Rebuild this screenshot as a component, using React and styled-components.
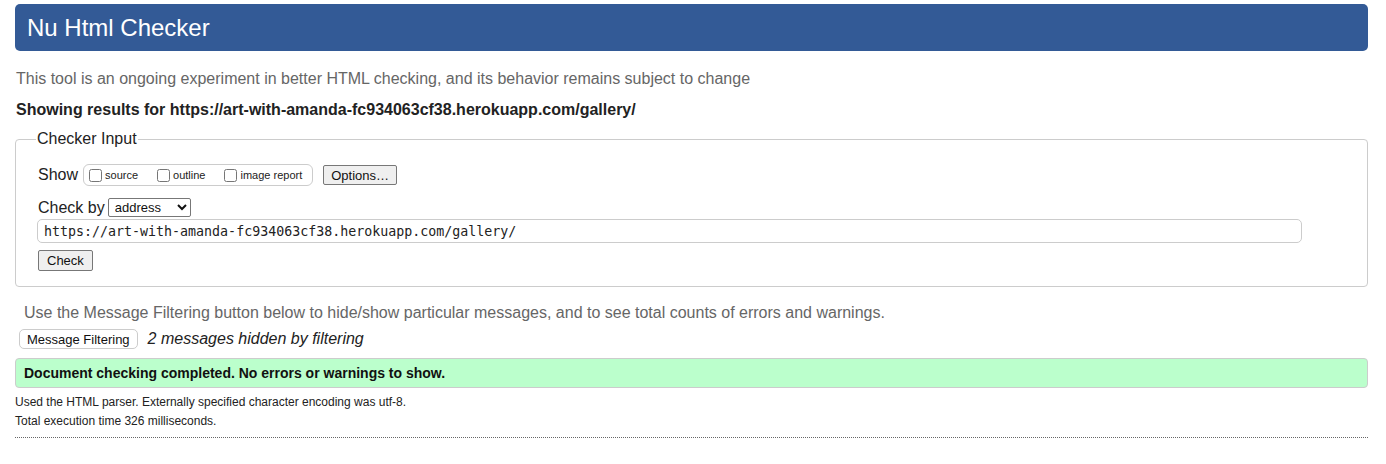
import React from 'react';
import styled, { createGlobalStyle } from 'styled-components';

const GlobalStyle = createGlobalStyle`
    body {
        margin: 0;
        background: #fff;
        font-family: "Liberation Sans", Arial, sans-serif;
        color: #222;
    }
`;

const Page = styled.div`
    padding: 4px 18px 0 15px;
    display: flex;
    flex-direction: column;
`;

const Header = styled.h1`
    margin: 0;
    height: 47px;
    background: #335a96;
    border-radius: 5px;
    color: #fff;
    font-size: 24px;
    font-weight: normal;
    display: flex;
    align-items: center;
    padding-left: 12px;
`;

const Intro = styled.p`
    margin: 18px 0 0 1px;
    font-size: 16px;
    color: #666;
    line-height: 20px;
`;

const Results = styled.p`
    margin: 11px 0 0 1px;
    font-size: 16px;
    font-weight: bold;
    color: #222;
    line-height: 20px;
`;

const Fieldset = styled.fieldset`
    margin: 10px 0 0;
    border: 1px solid #ccc;
    border-radius: 4px;
    padding: 16px 22px 15px 22px;
    display: flex;
    flex-direction: column;

    legend {
        font-size: 16px;
        padding: 0 1px;
        margin-left: -2px;
        color: #222;
    }
`;

const Row = styled.div`
    display: flex;
    align-items: center;
    font-size: 16px;
    margin-top: ${p => p.mt || 0}px;
`;

const Label = styled.span`
    margin-right: ${p => p.gap || 0}px;
`;

const OptionGroup = styled.div`
    display: flex;
    align-items: center;
    height: 20px;
    border: 1px solid #ccc;
    border-radius: 6px;
    padding: 0 10px 0 5px;
    gap: 19px;
`;

const Option = styled.label`
    display: flex;
    align-items: center;
    font-size: 11px;
    color: #222;

    input {
        margin: 0 3px 0 0;
        width: 13px;
        height: 13px;
    }
`;

const Button = styled.button`
    font-family: "Liberation Sans", Arial, sans-serif;
    font-size: ${p => p.fs || 13}px;
    color: #111;
    background: ${p => p.light ? '#fff' : '#efefef'};
    border: 1px solid ${p => p.light ? '#ccc' : '#777'};
    border-radius: ${p => p.light ? 5 : 2}px;
    padding: 0 ${p => p.px || 7}px;
    height: ${p => p.h || 20}px;
    margin-left: ${p => p.ml || 0}px;
`;

const Select = styled.select`
    font-family: "Liberation Sans", Arial, sans-serif;
    font-size: 13px;
    height: 19px;
    width: 83px;
    border: 1px solid #777;
    border-radius: 2px;
    background: #fff;
    color: #111;
    margin-left: 3px;
    padding: 0 2px;
`;

const UrlInput = styled.input`
    margin-top: 2px;
    width: 1265px;
    height: 24px;
    box-sizing: border-box;
    border: 1px solid #ccc;
    border-radius: 5px;
    padding: 0 6px;
    font-family: "DejaVu Sans Mono", "Liberation Mono", monospace;
    font-size: 13.3px;
    color: #222;
    margin-left: -1px;
`;

const Hint = styled.p`
    margin: 16px 0 0 9px;
    font-size: 16px;
    color: #666;
    line-height: 20px;
`;

const FilterRow = styled.div`
    display: flex;
    align-items: center;
    margin-top: 6px;
    margin-left: 4px;
    gap: 10px;
`;

const Hidden = styled.em`
    font-size: 16px;
    color: #222;
`;

const Success = styled.div`
    margin-top: 9px;
    height: 30px;
    box-sizing: border-box;
    background: #bbffcc;
    border: 1px solid #ccc;
    border-radius: 4px;
    display: flex;
    align-items: center;
    padding-left: 8px;
    font-size: 14px;
    font-weight: bold;
    color: #111;
`;

const Detail = styled.p`
    margin: ${p => p.mt}px 0 0;
    font-size: 12px;
    color: #222;
    line-height: 14px;
`;

const Rule = styled.hr`
    margin: 9px 0 0;
    border: 0;
    border-top: 1px dotted #666;
`;

export default function App() {
    const url = 'https://art-with-amanda-fc934063cf38.herokuapp.com/gallery/';
    return (
        <>
            <GlobalStyle />
            <Page>
                <Header>Nu Html Checker</Header>
                <Intro>This tool is an ongoing experiment in better HTML checking, and its behavior remains subject to change</Intro>
                <Results>Showing results for {url}</Results>
                <Fieldset>
                    <legend>Checker Input</legend>
                    <Row>
                        <Label gap={5}>Show</Label>
                        <OptionGroup>
                            <Option><input type="checkbox" />source</Option>
                            <Option><input type="checkbox" />outline</Option>
                            <Option><input type="checkbox" />image report</Option>
                        </OptionGroup>
                        <Button ml={10} h={20}>Options…</Button>
                    </Row>
                    <Row mt={12}>
                        <Label>Check by</Label>
                        <Select defaultValue="address">
                            <option value="address">address</option>
                            <option value="upload">file upload</option>
                            <option value="textarea">text input</option>
                        </Select>
                    </Row>
                    <UrlInput defaultValue={url} />
                    <Row mt={7}>
                        <Button h={21} px={8}>Check</Button>
                    </Row>
                </Fieldset>
                <Hint>Use the Message Filtering button below to hide/show particular messages, and to see total counts of errors and warnings.</Hint>
                <FilterRow>
                    <Button light h={20} px={7}>Message Filtering</Button>
                    <Hidden>2 messages hidden by filtering</Hidden>
                </FilterRow>
                <Success>Document checking completed. No errors or warnings to show.</Success>
                <Detail mt={7}>Used the HTML parser. Externally specified character encoding was utf-8.</Detail>
                <Detail mt={5}>Total execution time 326 milliseconds.</Detail>
                <Rule />
            </Page>
        </>
    );
}
